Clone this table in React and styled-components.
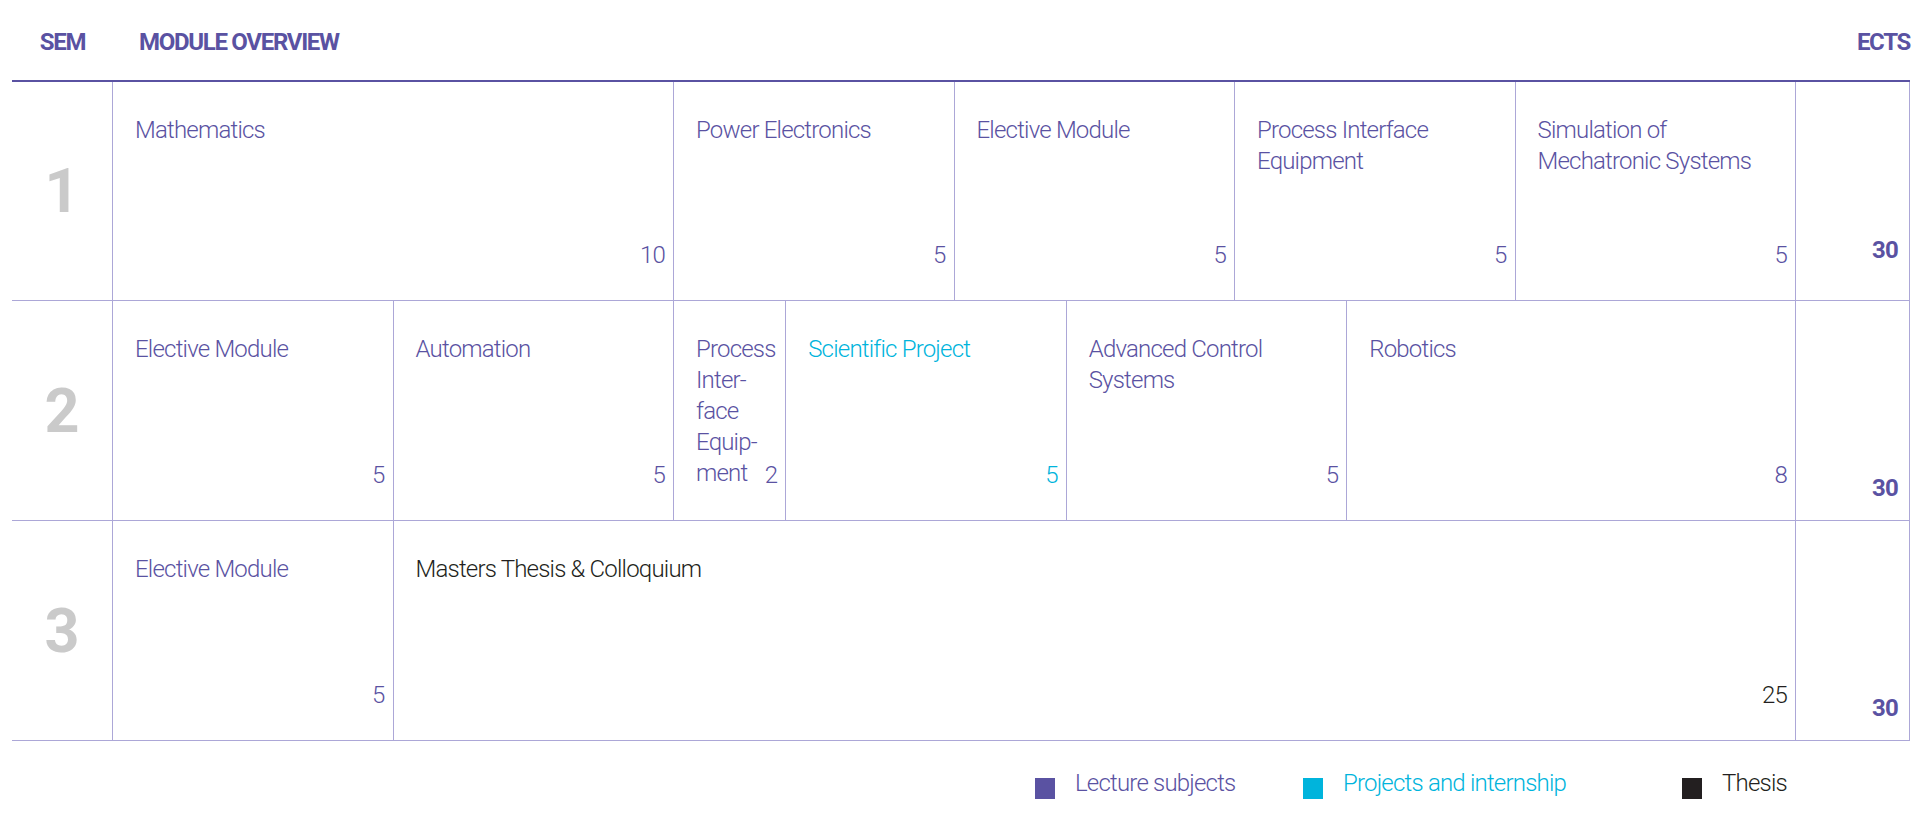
import React from 'react';
import styled, { createGlobalStyle } from 'styled-components';

const purple = '#5a52a2';
const cyan = '#00b4dc';
const ink = '#231f20';
const rule = '#aca7d7';

const GlobalStyle = createGlobalStyle`
    body {
        margin: 0;
        background: #fff;
        font-family: Roboto, "Noto Sans", sans-serif;
    }
`;

const semesters = [
    {
        sem: 1,
        total: 30,
        lift: 34,
        modules: [
            { lines: ['Mathematics'], ects: 10 },
            { lines: ['Power Electronics'], ects: 5 },
            { lines: ['Elective Module'], ects: 5 },
            { lines: ['Process Interface', 'Equipment'], ects: 5 },
            { lines: ['Simulation of', 'Mechatronic Systems'], ects: 5 },
        ],
    },
    {
        sem: 2,
        total: 30,
        lift: 16,
        modules: [
            { lines: ['Elective Module'], ects: 5 },
            { lines: ['Automation'], ects: 5 },
            { lines: ['Process', 'Inter-', 'face', 'Equip-', 'ment'], ects: 2, overlap: true },
            { lines: ['Scientific Project'], ects: 5, tone: cyan },
            { lines: ['Advanced Control', 'Systems'], ects: 5 },
            { lines: ['Robotics'], ects: 8 },
        ],
    },
    {
        sem: 3,
        total: 30,
        lift: 16,
        modules: [
            { lines: ['Elective Module'], ects: 5 },
            { lines: ['Masters Thesis & Colloquium'], ects: 25, tone: ink },
        ],
    },
];

const legend = [
    { label: 'Lecture subjects', tone: purple, width: 268 },
    { label: 'Projects and internship', tone: cyan, width: 379 },
    { label: 'Thesis', tone: ink },
];

const Page = styled.div`
    width: 1898px;
    margin-left: 12px;
`;

const HeaderRow = styled.div`
    display: grid;
    grid-template-columns: 101px 1fr 114px;
    height: 82px;
    box-sizing: border-box;
    padding-top: 27px;
    border-bottom: 2px solid ${purple};
    font-size: 24px;
    line-height: 31px;
    font-weight: 700;
    letter-spacing: -1.3px;
    color: ${purple};
`;

const HeaderLabel = styled.div`
    text-align: ${props => props.$align || 'left'};
    padding-left: ${props => props.$indent || 0}px;
`;

const SemesterRow = styled.div`
    display: grid;
    grid-template-columns: 101px repeat(30, minmax(0, 1fr)) 114px;
    height: ${props => props.$height}px;
    box-sizing: border-box;
    border-bottom: 1px solid ${rule};
`;

const SemNumber = styled.div`
    display: flex;
    align-items: center;
    justify-content: center;
    border-right: 1px solid ${rule};
    font-size: 61px;
    font-weight: 700;
    color: #cacaca;
`;

const ModuleCell = styled.div`
    grid-column: span ${props => props.$span};
    display: flex;
    flex-direction: column;
    justify-content: space-between;
    padding: 33px 8px 29px 22px;
    border-right: 1px solid ${rule};
    font-size: 24px;
    line-height: 31px;
    font-weight: 300;
    letter-spacing: -0.8px;
    color: ${props => props.$tone};
    min-width: 0;
`;

const Title = styled.div`
    white-space: nowrap;
`;

const TitleLine = styled.span`
    display: block;
`;

const Credits = styled.div`
    align-self: flex-end;
    margin-top: ${props => (props.$overlap ? '-31px' : '0')};
`;

const TotalCell = styled.div`
    display: flex;
    align-items: flex-end;
    justify-content: flex-end;
    padding: 0 11px ${props => props.$lift}px 0;
    border-right: 1px solid ${rule};
    font-size: 24px;
    line-height: 31px;
    font-weight: 700;
    letter-spacing: -0.8px;
    color: ${purple};
`;

const Legend = styled.div`
    display: flex;
    padding: 27px 0 0 1023px;
`;

const LegendItem = styled.div`
    display: flex;
    align-items: flex-start;
    gap: 20px;
    width: ${props => (props.$width ? `${props.$width}px` : 'auto')};
    font-size: 24px;
    line-height: 31px;
    font-weight: 300;
    letter-spacing: -0.8px;
    color: ${props => props.$tone};
`;

const Swatch = styled.span`
    width: 20px;
    height: 21px;
    margin-top: 10px;
    background: ${props => props.$tone};
    flex-shrink: 0;
`;

const App = () => {
    return (
        <Page>
            <GlobalStyle />
            <HeaderRow>
                <HeaderLabel $align="center">SEM</HeaderLabel>
                <HeaderLabel $indent={26}>MODULE OVERVIEW</HeaderLabel>
                <HeaderLabel $align="right">ECTS</HeaderLabel>
            </HeaderRow>
            {semesters.map((s, i) => (
                <SemesterRow key={s.sem} $height={i === 0 ? 219 : 220}>
                    <SemNumber>{s.sem}</SemNumber>
                    {s.modules.map((m, j) => (
                        <ModuleCell key={j} $span={m.ects} $tone={m.tone || purple}>
                            <Title>
                                {m.lines.map(l => (
                                    <TitleLine key={l}>{l}</TitleLine>
                                ))}
                            </Title>
                            <Credits $overlap={m.overlap}>{m.ects}</Credits>
                        </ModuleCell>
                    ))}
                    <TotalCell $lift={s.lift}>{s.total}</TotalCell>
                </SemesterRow>
            ))}
            <Legend>
                {legend.map(item => (
                    <LegendItem key={item.label} $tone={item.tone} $width={item.width}>
                        <Swatch $tone={item.tone} />
                        {item.label}
                    </LegendItem>
                ))}
            </Legend>
        </Page>
    );
};

export default App;
